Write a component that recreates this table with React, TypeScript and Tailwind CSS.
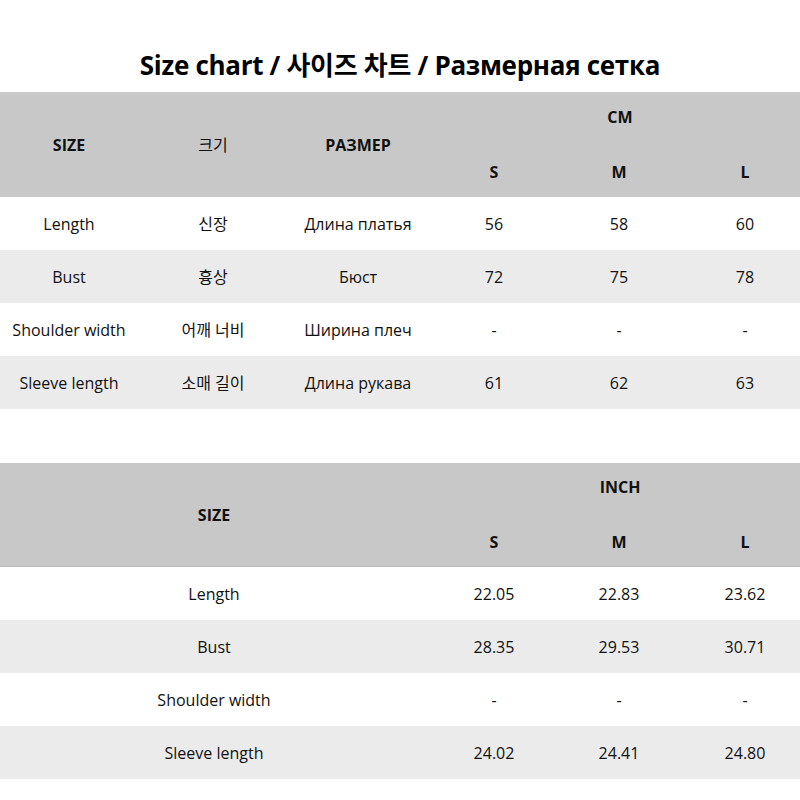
import React from 'react';

const cols = 'grid grid-cols-[138px_150px_152px_108px_142px_110px]';
const cols2 = 'grid grid-cols-[440px_108px_142px_110px]';

const cmRows = [
  { en: 'Length', ko: '신장', ru: 'Длина платья', v: ['56', '58', '60'] },
  { en: 'Bust', ko: '흉상', ru: 'Бюст', v: ['72', '75', '78'] },
  { en: 'Shoulder width', ko: '어깨 너비', ru: 'Ширина плеч', v: ['-', '-', '-'] },
  { en: 'Sleeve length', ko: '소매 길이', ru: 'Длина рукава', v: ['61', '62', '63'] },
];

const inchRows = [
  { en: 'Length', v: ['22.05', '22.83', '23.62'] },
  { en: 'Bust', v: ['28.35', '29.53', '30.71'] },
  { en: 'Shoulder width', v: ['-', '-', '-'] },
  { en: 'Sleeve length', v: ['24.02', '24.41', '24.80'] },
];

const font = { fontFamily: '"Open Sans", "Noto Sans CJK KR", sans-serif' };

const Cell = ({ children, className = '' }: { children: React.ReactNode; className?: string }) => (
  <div className={`flex items-center justify-center ${className}`}>{children}</div>
);

export default function App() {
  return (
    <div className="w-[800px] h-[800px] bg-white text-[#111] overflow-hidden" style={font}>
      <div className="h-[92px] flex items-center justify-center pt-[38px]">
        <h1 className="text-[26px] font-bold tracking-[-0.3px] leading-none text-black">
          Size chart / 사이즈 차트 / Размерная сетка
        </h1>
      </div>

      {/* CM table */}
      <div className="text-[16px]">
        <div className={`${cols} h-[105px] bg-[#c8c8c8]`}>
          <Cell className="row-span-2 font-bold">SIZE</Cell>
          <Cell className="row-span-2">크기</Cell>
          <Cell className="row-span-2 font-bold pr-3">РАЗМЕР</Cell>
          <Cell className="col-span-3 font-bold pb-1">CM</Cell>
          <Cell className="font-bold">S</Cell>
          <Cell className="font-bold">M</Cell>
          <Cell className="font-bold">L</Cell>
        </div>
        {cmRows.map((r, i) => (
          <div key={r.en} className={`${cols} h-[53px] ${i % 2 ? 'bg-[#ebebeb]' : 'bg-white'}`}>
            <Cell>{r.en}</Cell>
            <Cell>{r.ko}</Cell>
            <Cell className="pr-3">{r.ru}</Cell>
            {r.v.map((v, j) => (
              <Cell key={j}>{v}</Cell>
            ))}
          </div>
        ))}
      </div>

      <div className="h-[54px]" />

      {/* INCH table */}
      <div className="text-[16px]">
        <div className={`${cols2} h-[104px] bg-[#c8c8c8] border-b border-[#bdbdbd]`}>
          <Cell className="row-span-2 font-bold pr-3">SIZE</Cell>
          <Cell className="col-span-3 font-bold pb-2">INCH</Cell>
          <Cell className="font-bold">S</Cell>
          <Cell className="font-bold">M</Cell>
          <Cell className="font-bold">L</Cell>
        </div>
        {inchRows.map((r, i) => (
          <div key={r.en} className={`${cols2} h-[53px] ${i % 2 ? 'bg-[#ebebeb]' : 'bg-white'}`}>
            <Cell className="pr-3">{r.en}</Cell>
            {r.v.map((v, j) => (
              <Cell key={j}>{v}</Cell>
            ))}
          </div>
        ))}
      </div>
    </div>
  );
}
